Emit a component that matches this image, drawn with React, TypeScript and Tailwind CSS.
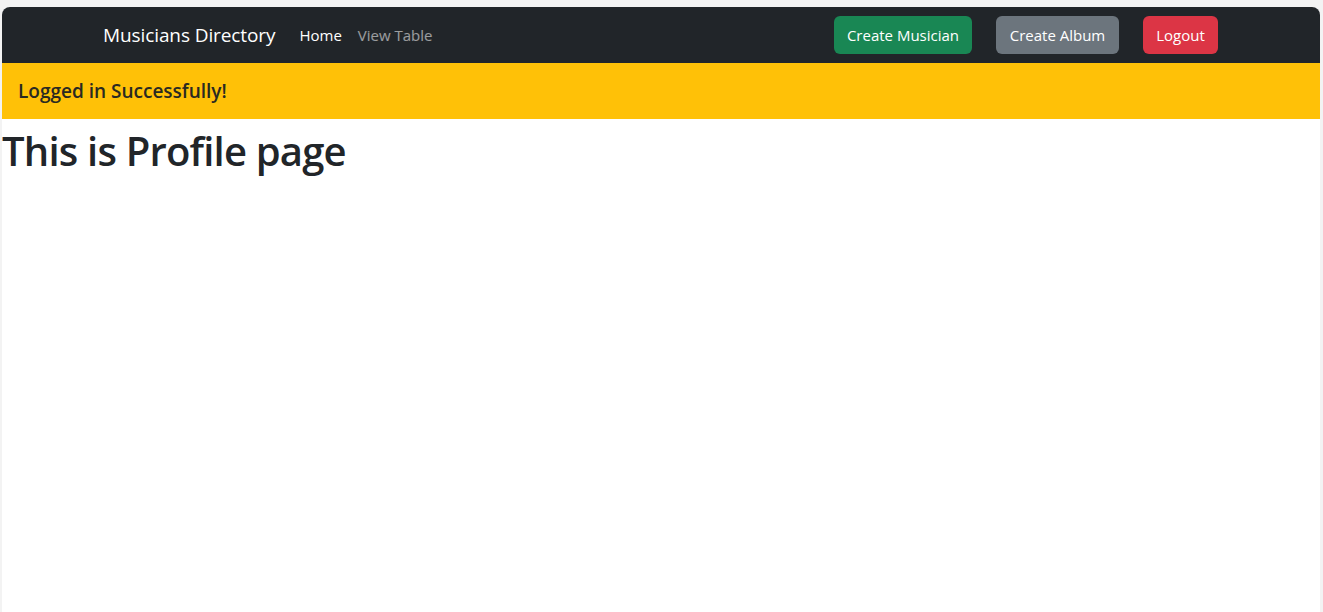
const App: React.FC = () => {
  return (
    <div
      className="h-[612px] w-full overflow-hidden bg-[#f3f3f3] pt-[7px] pl-[2px] pr-[3px]"
      style={{ fontFamily: '"Open Sans", "Noto Sans", sans-serif' }}
    >
      <div className="flex h-full flex-col overflow-hidden rounded-t-[8px] bg-white">
        {/* navbar */}
        <nav className="flex h-[56px] shrink-0 items-center bg-[#212529] pl-[101px] pr-[102px]">
          <a className="mr-[24px] text-[19px] tracking-[-0.1px] text-white" href="#">
            Musicians Directory
          </a>
          <div className="flex items-center gap-[16px] text-[15px]">
            <a className="text-white" href="#">
              Home
            </a>
            <a className="text-white/55" href="#">
              View Table
            </a>
          </div>
          <div className="ml-auto flex items-center gap-[24px] text-[15px]">
            <button
              type="button"
              className="h-[38px] w-[138px] rounded-[6px] bg-[#198754] text-white"
            >
              Create Musician
            </button>
            <button
              type="button"
              className="h-[38px] w-[123px] rounded-[6px] bg-[#6c757d] text-white"
            >
              Create Album
            </button>
            <button
              type="button"
              className="h-[38px] w-[75px] rounded-[6px] bg-[#dc3545] text-white"
            >
              Logout
            </button>
          </div>
        </nav>

        {/* alert */}
        <div className="flex h-[56px] shrink-0 items-center bg-[#ffc107] px-[16px]">
          <h5 className="text-[19px] font-semibold text-[#2a2a22]">
            Logged in Successfully!
          </h5>
        </div>

        <h1 className="mt-[8px] text-[40px] font-semibold leading-[1.2] tracking-[-0.8px] text-[#212529]">
          This is Profile page
        </h1>
      </div>
    </div>
  );
};

export default App;
